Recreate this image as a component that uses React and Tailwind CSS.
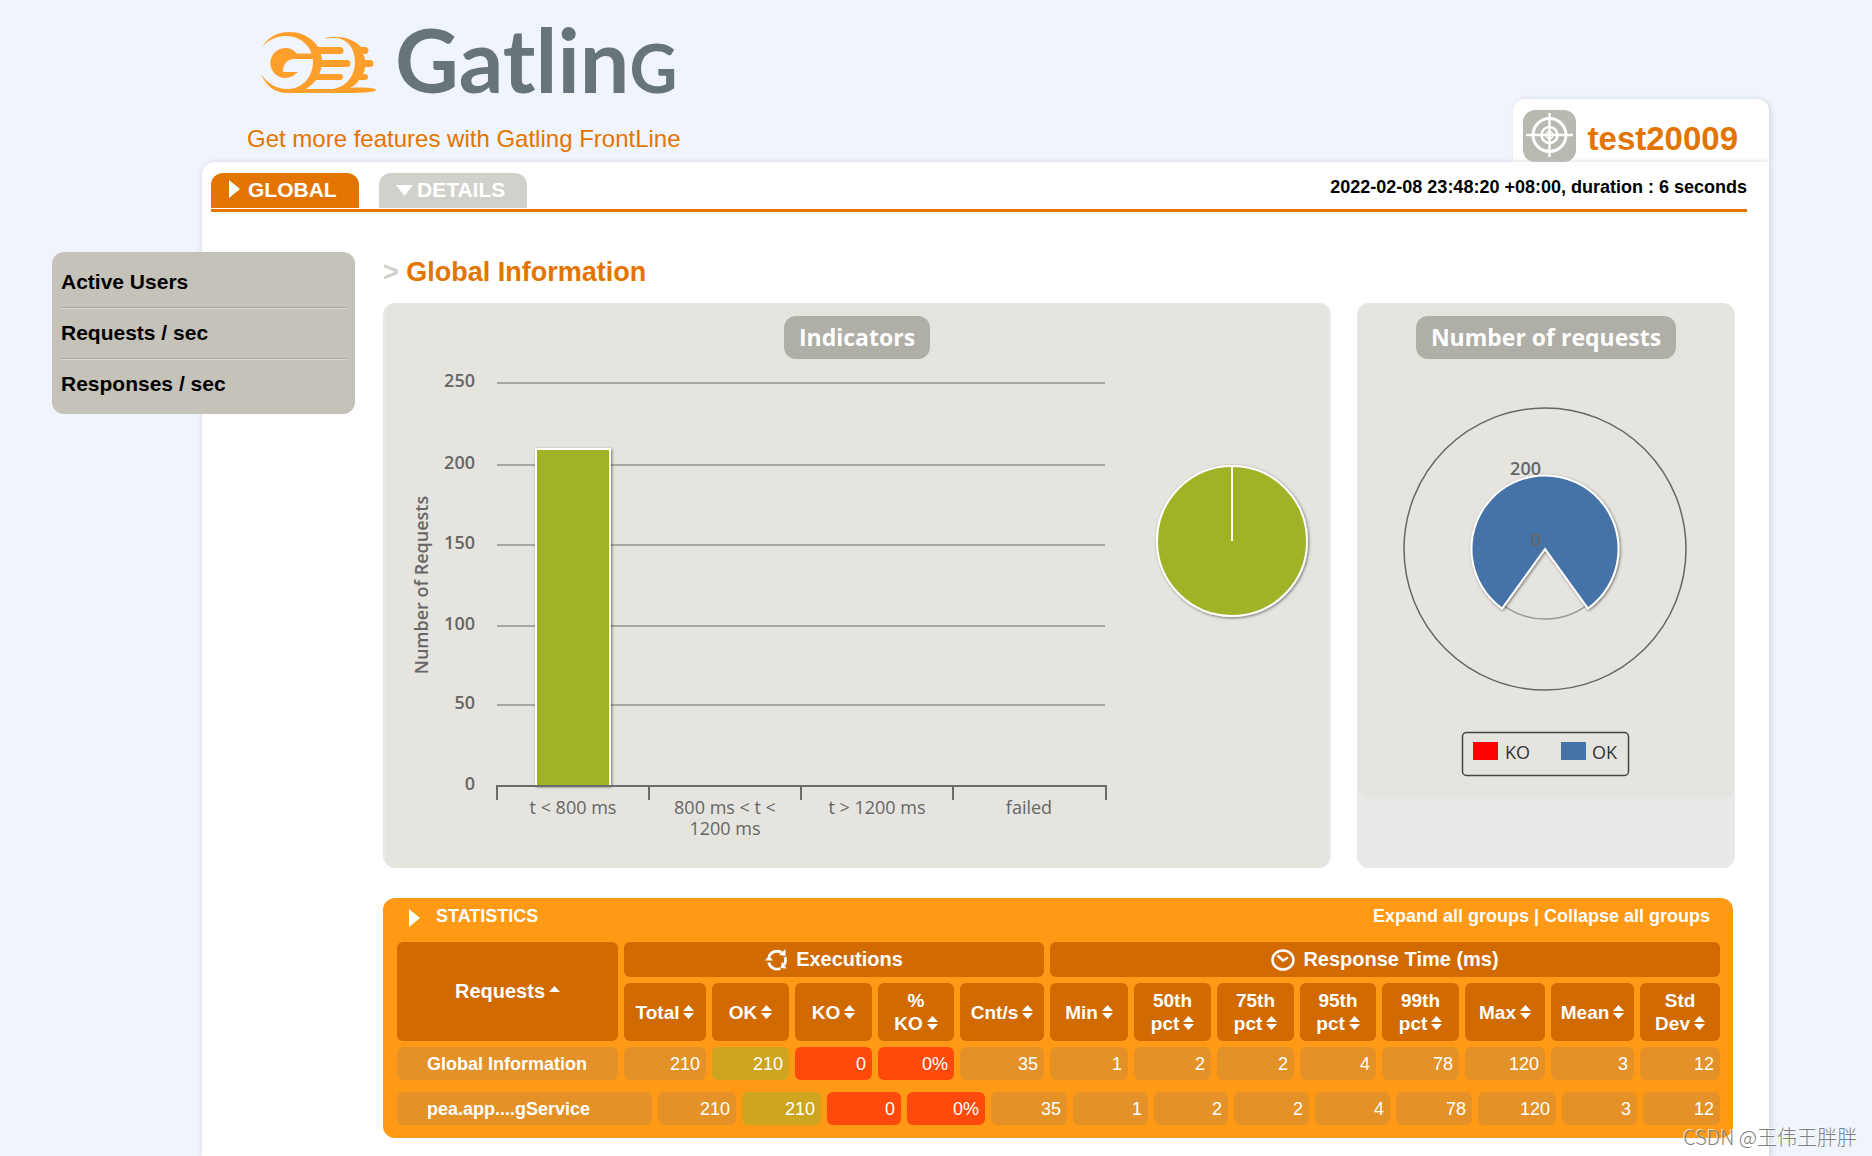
import React from 'react';

const gridLines = [
    { value: 250, y: 24 },
    { value: 200, y: 106 },
    { value: 150, y: 186 },
    { value: 100, y: 267 },
    { value: 50, y: 346 },
];

const categories = [
    { x: 190, lines: ['t < 800 ms'] },
    { x: 342, lines: ['800 ms < t <', '1200 ms'] },
    { x: 494, lines: ['t > 1200 ms'] },
    { x: 646, lines: ['failed'] },
];

const columns = [
    ['Total'], ['OK'], ['KO'], ['%', 'KO'], ['Cnt/s'], ['Min'],
    ['50th', 'pct'], ['75th', 'pct'], ['95th', 'pct'], ['99th', 'pct'],
    ['Max'], ['Mean'], ['Std', 'Dev'],
];

const values = ['210', '210', '0', '0%', '35', '1', '2', '2', '4', '78', '120', '3', '12'];

const globalWidths = [221, 82, 77, 77, 76, 84, 78, 77, 77, 76, 77, 80, 83, 80];
const detailWidths = [255, 78, 79, 74, 78, 76, 75, 74, 75, 75, 76, 78, 75, 77];

const GatlingMark = () => (
    <svg width="116" height="62" viewBox="0 0 116 62" fill="#ff9f2b" aria-hidden="true">
        <path d="M1 15C7 5 17 0 28 0c19 0 33 13 33 29 0 12-6 22-16 28h27c13-2 22-13 22-27C94 15 85 6 74 6c-4 0-8 0-11 1 4-2 8-2 12-2 12 0 21 5 25 10h4a3.500 3.500 0 0 1 0 7h-2q2 3 2 6h5a3.500 3.500 0 0 1 0 7h-5q0 4-2 7h2a3 3 0 0 1 0 6h-6q-4 6-9 8c14-1 26 0 26 2s-12 3-28 3H26C14 61 4 53 0 42c6 9 15 15 27 15 14 0 25-12 25-27S40 4 25 4C15 4 7 8 1 15z" />
        <path d="M36 21.500a15 15 0 1 0-1 20l2-1.500H22c0-7 3-12 10-13h22v-5.500z" />
        <path d="M56 15h23a3.500 3.500 0 0 1 0 7H59zM60 28h26a3.500 3.500 0 0 1 0 7H60zM58 42h21a3 3 0 0 1 0 6H53z" />
    </svg>
);

const TargetIcon = () => (
    <svg width="53" height="52" viewBox="0 0 53 52" aria-hidden="true">
        <rect width="53" height="52" rx="12" fill="#b9b9b2" />
        <g fill="none" stroke="#fff" strokeWidth="3">
            <circle cx="26.5" cy="25" r="16.5" />
            <circle cx="26.5" cy="25" r="8" strokeWidth="2.5" />
            <circle cx="26.5" cy="25" r="3.5" strokeWidth="1.5" />
            <path d="M26.5 3v44M3 25h47" strokeWidth="2.5" />
        </g>
    </svg>
);

const CycleIcon = () => (
    <svg width="23" height="24" viewBox="0 0 23 24" fill="none" stroke="#fff" strokeWidth="2.8" aria-hidden="true">
        <path d="M4 8.500a8.800 8.800 0 0 1 12.500-4M20 9a8.800 8.800 0 0 1-1 8M15.500 20.500a8.800 8.800 0 0 1-11.800-6" />
        <path d="M20.500 1v7l-6.500-1zM21.500 20.500l-6-.5 1.500-6zM0 12.500L4 7.500l4 5z" fill="#fff" stroke="none" />
    </svg>
);

const ClockIcon = () => (
    <svg width="24" height="22" viewBox="0 0 24 22" fill="none" stroke="#fff" strokeWidth="2.5" aria-hidden="true">
        <ellipse cx="12" cy="11" rx="10.5" ry="9.5" />
        <path d="M6.500 6.500l5.500 5 5-3" />
    </svg>
);

const SortIcon = () => (
    <svg className="mb-[3px] ml-1 inline-block" width="11" height="14" viewBox="0 0 11 14" fill="#fff" aria-hidden="true">
        <path d="M0 6L5.500 0 11 6zM0 8h11l-5.500 6z" />
    </svg>
);

const Header = () => (
    <header className="mr-[103px] ml-[202px] flex items-end justify-between">
        <div className="pt-[15px] pb-[9px] pl-[45px]">
            <div className="flex items-start gap-[18px] pl-[14px]">
                <div className="pt-[17px]"><GatlingMark /></div>
                <h1 className="font-[Lato] text-[88px] leading-[88px] font-bold text-[#67747a]">
                    Gatlin<span className="text-[66px] leading-none uppercase">g</span>
                </h1>
            </div>
            <a href="#frontline" className="mt-[22px] block text-[24px] leading-[28px] text-[#e37400]">
                Get more features with Gatling FrontLine
            </a>
        </div>
        <div className="flex items-end gap-3 rounded-t-[12px] bg-white pt-[11px] pr-[31px] pl-[10px] shadow-[2px_0_5px_#d5d9df]">
            <TargetIcon />
            <span className="mb-[5px] text-[33px] leading-[36px] font-bold text-[#e37400]">test20009</span>
        </div>
    </header>
);

const TabBar = () => (
    <div className="flex border-b-[3px] border-[#e37400] pb-px">
        <nav className="flex gap-5 text-[21px] leading-[33px] font-bold text-white">
            <a href="#global" className="flex h-[35px] w-[148px] gap-2 rounded-t-[12px] bg-[#e37400] pl-[18px]">
                <svg className="mt-[7px]" width="11" height="18" viewBox="0 0 11 18" fill="#fff" aria-hidden="true">
                    <path d="M0 0l11 9-11 9z" />
                </svg>
                GLOBAL
            </a>
            <a href="#details" className="flex h-[35px] w-[148px] gap-1 rounded-t-[12px] bg-[#d1d1cc] pl-[17px]">
                <svg className="mt-[12px]" width="17" height="11" viewBox="0 0 17 11" fill="#fff" aria-hidden="true">
                    <path d="M0 0h17l-8.500 11z" />
                </svg>
                DETAILS
            </a>
        </nav>
        <p className="ml-auto pt-1 text-[18px] leading-[20px] font-bold text-black">
            2022-02-08 23:48:20 +08:00, duration : 6 seconds
        </p>
    </div>
);

const SideMenu = () => (
    <nav className="-ml-[159px] w-[303px] shrink-0 self-start rounded-[12px] bg-[#c5c2ba] px-[9px] pt-[6px] pb-[5px]">
        <ul className="text-[21px] leading-[24px] font-bold text-black">
            <li className="mb-px border-b border-[#a9a7a2] pt-3 pb-[13px] shadow-[0_1px_0_#d9d7d2]"><a href="#users">Active Users</a></li>
            <li className="mb-px border-b border-[#a9a7a2] pt-3 pb-[13px] shadow-[0_1px_0_#d9d7d2]"><a href="#requests">Requests / sec</a></li>
            <li className="pt-3 pb-[13px]"><a href="#responses">Responses / sec</a></li>
        </ul>
    </nav>
);

const ChartTitle = ({ children }) => (
    <h3 className="mx-auto w-fit rounded-[12px] bg-[#afaea7] px-[15px] font-['Open_Sans'] text-[23px] leading-[43px] font-bold text-white">
        {children}
    </h3>
);

const Indicators = () => (
    <section className="min-w-0 flex-1 rounded-[12px] border-x-2 border-[#e9e9e9] bg-[#e5e4df] pt-[13px]">
        <ChartTitle>Indicators</ChartTitle>
        <svg className="block h-auto w-full font-['Open_Sans']" viewBox="2 0 944 509">
            <defs>
                <filter id="shadow" x="-20%" y="-20%" width="150%" height="150%">
                    <feDropShadow dx="1" dy="1" stdDeviation="1.5" floodColor="#000" floodOpacity="0.5" />
                </filter>
            </defs>
            {gridLines.map((line) => (
                <g key={line.value}>
                    <path d={`M114 ${line.y}H722`} stroke="#a6a6a4" strokeWidth="2" />
                    <text x="92" y={line.y + 4} textAnchor="end" fontSize="18" fontWeight="600" fill="#666">{line.value}</text>
                </g>
            ))}
            <text x="92" y="431" textAnchor="end" fontSize="18" fontWeight="600" fill="#666">0</text>
            <text transform="translate(45 226) rotate(-90)" textAnchor="middle" fontSize="18" fontWeight="600" fill="#666">
                Number of Requests
            </text>
            <path d="M153 427V90h74v337" fill="#a0b228" stroke="#fff" strokeWidth="2" filter="url(#shadow)" />
            <path d="M114 441v-14h609v14M266 427v14M418 427v14M570 427v14" fill="none" stroke="#6b6b69" strokeWidth="2" />
            {categories.map((cat) => cat.lines.map((line, i) => (
                <text key={line} x={cat.x} y={455 + i * 21} textAnchor="middle" fontSize="18" fill="#666">{line}</text>
            )))}
            <g filter="url(#shadow)">
                <circle cx="849" cy="182" r="75" fill="#a0b228" stroke="#fff" strokeWidth="2" />
                <path d="M849 107v75" stroke="#fff" strokeWidth="2" />
            </g>
        </svg>
    </section>
);

const RequestCount = () => (
    <section className="w-[378px] shrink-0 rounded-[12px] bg-[#e9e9e9] px-px">
        <div className="rounded-[12px] bg-[#e5e4df] pt-[13px]">
            <ChartTitle>Number of requests</ChartTitle>
            <svg className="block h-auto w-full font-['Open_Sans']" viewBox="1 0 376 440">
                <circle cx="188" cy="190" r="141" fill="none" stroke="#666" strokeWidth="1.5" />
                <circle cx="188" cy="190" r="70" fill="none" stroke="#999" strokeWidth="1.5" />
                <path d="M188 190L145 249.500A73.500 73.500 0 1 1 231 249.500z" fill="#4572a7" stroke="#fff" strokeWidth="2" filter="url(#shadow)" />
                <text x="184" y="116" textAnchor="end" fontSize="18" fontWeight="600" fill="#666">200</text>
                <text x="184" y="187" textAnchor="end" fontSize="18" fontWeight="600" fill="#666">0</text>
                <rect x="105.5" y="373.5" width="166" height="43" rx="4" fill="none" stroke="#444" strokeWidth="1.5" />
                <rect x="116" y="383" width="25" height="18" fill="#f00" />
                <text x="148" y="400" fontSize="18" fill="#333">KO</text>
                <rect x="204" y="383" width="25" height="18" fill="#4572a7" />
                <text x="235" y="400" fontSize="18" fill="#333">OK</text>
            </svg>
        </div>
    </section>
);

const Columns = ({ widths }) => (
    <colgroup>
        {widths.map((width, i) => <col key={i} style={{ width: `${width}px` }} />)}
    </colgroup>
);

const cellColor = (i) => {
    if (i === 1) return 'bg-[#cea51e]';
    if (i === 2 || i === 3) return 'bg-[#ff4a0b]';
    return 'bg-[#e49228]';
};

const StatRow = ({ name }) => (
    <tr className="h-[33px]">
        <th scope="row" className="rounded-[6px] bg-[#e49228] p-0 pl-[30px] text-left font-bold">
            <a href="#request">{name}</a>
        </th>
        {values.map((value, i) => (
            <td key={i} className={`rounded-[6px] p-0 pr-[6px] text-right ${cellColor(i)}`}>{value}</td>
        ))}
    </tr>
);

const Statistics = () => (
    <section className="mt-[30px] mr-[2px] rounded-[12px] bg-[#ff9916] pr-[7px] pb-[7px] pl-2 text-[18px] leading-[20px] text-white">
        <div className="flex h-[38px] items-start pt-2 pr-4 pl-[18px] font-bold">
            <svg className="mt-[3px] mr-4" width="11" height="18" viewBox="0 0 11 18" fill="#fff" aria-hidden="true">
                <path d="M0 0l11 9-11 9z" />
            </svg>
            <h3>STATISTICS</h3>
            <p className="ml-auto">
                <a href="#expand">Expand all groups</a> | <a href="#collapse">Collapse all groups</a>
            </p>
        </div>
        <table className="w-full table-fixed border-separate border-spacing-[6px]">
            <Columns widths={globalWidths} />
            <thead className="leading-[23px] font-bold">
                <tr className="h-[35px] text-[20px]">
                    <th rowSpan="2" className="rounded-[6px] bg-[#d16a00] p-0">
                        <button type="button">
                            Requests
                            <svg className="mb-[7px] ml-1 inline-block" width="11" height="6" viewBox="0 0 11 6" fill="#fff" aria-hidden="true">
                                <path d="M0 6l5.500-6L11 6z" />
                            </svg>
                        </button>
                    </th>
                    <th colSpan="5" className="rounded-[6px] bg-[#d16a00] p-0">
                        <span className="flex items-center justify-center gap-2"><CycleIcon />Executions</span>
                    </th>
                    <th colSpan="8" className="rounded-[6px] bg-[#d16a00] p-0">
                        <span className="flex items-center justify-center gap-2"><ClockIcon />Response Time (ms)</span>
                    </th>
                </tr>
                <tr className="h-[58px] text-[19px]">
                    {columns.map((lines) => (
                        <th key={lines.join(' ')} className="rounded-[6px] bg-[#d16a00] p-0">
                            <button type="button" className="whitespace-nowrap">
                                {lines.length > 1 && <>{lines[0]}<br /></>}
                                {lines[lines.length - 1]}
                                <SortIcon />
                            </button>
                        </th>
                    ))}
                </tr>
            </thead>
            <tbody>
                <StatRow name="Global Information" />
            </tbody>
        </table>
        <table className="w-full table-fixed border-separate border-spacing-[6px]">
            <Columns widths={detailWidths} />
            <tbody>
                <StatRow name="pea.app....gService" />
            </tbody>
        </table>
    </section>
);

const App = () => (
    <div className="relative flex min-h-screen flex-col bg-[#f0f4fc] font-['Liberation_Sans',sans-serif]">
        <Header />
        <main className="mr-[103px] ml-[202px] flex-1 rounded-tl-[12px] bg-white pt-[11px] pr-[22px] pl-[9px] shadow-[1px_1px_6px_#c8ccd2]">
            <TabBar />
            <div className="mt-10 flex gap-7 pr-3">
                <SideMenu />
                <div className="min-w-0 flex-1 pt-1">
                    <h2 className="text-[27px] leading-[32px] font-bold text-[#e37400]">
                        <span className="text-[#d1d1cc]">&gt;</span> Global Information
                    </h2>
                    <div className="mt-[15px] flex gap-[26px]">
                        <Indicators />
                        <RequestCount />
                    </div>
                    <Statistics />
                </div>
            </div>
        </main>
        <p className="absolute right-[15px] bottom-[5px] font-['Noto_Sans_CJK_SC',sans-serif] text-[20px] leading-[28px] font-light text-[#808080] [text-shadow:-1px_-1px_0_#ffffffb0]">
            CSDN @王伟王胖胖
        </p>
    </div>
);

export default App;
